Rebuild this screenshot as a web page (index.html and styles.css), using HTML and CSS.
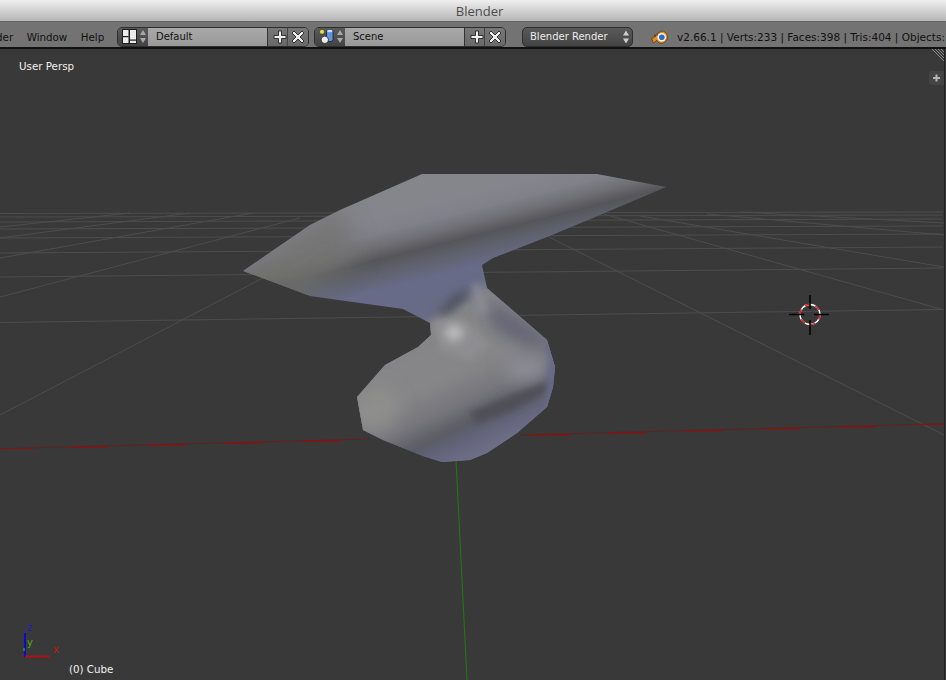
FILE: index.html
```html
<!DOCTYPE html>
<html lang="en">
<head>
<meta charset="utf-8">
<title>Blender</title>
<link rel="stylesheet" href="styles.css">
</head>
<body>
<div class="app">
  <div class="titlebar">Blender</div>
  <div class="header">
    <nav class="menus">
      <span class="menu">Render</span>
      <span class="menu">Window</span>
      <span class="menu">Help</span>
    </nav>
    <div class="selector">
      <div class="sel-icon">
        <svg class="ico" width="15" height="15" viewBox="0 0 15 15">
          <rect x="0.500" y="0.500" width="6.500" height="14" fill="#ececec" stroke="#1c1c1c" stroke-width="1"/>
          <rect x="7.500" y="0.500" width="7" height="14" fill="#ececec" stroke="#1c1c1c" stroke-width="1"/>
          <rect x="1" y="7" width="5.500" height="1.200" fill="#1c1c1c"/>
          <rect x="8" y="10.500" width="6" height="1.200" fill="#1c1c1c"/>
        </svg>
        <svg class="arrows" width="8" height="15" viewBox="0 0 8 15"><path d="M4 1 7 6H1Z M4 14 1 9H7Z" fill="#a8a8a8"/></svg>
      </div>
      <div class="sel-name">Default</div>
      <div class="sel-btn sel-btn-add">
        <svg width="14" height="14" viewBox="0 0 14 14"><path d="M5.500 1h3v4.500h4.500v3H8.500V13h-3V8.500H1v-3h4.500Z" fill="#eee" stroke="#222" stroke-width="0.9"/></svg>
      </div>
      <div class="sel-btn">
        <svg width="14" height="14" viewBox="0 0 14 14"><path d="M3 1 7 5 11 1 13 3 9 7 13 11 11 13 7 9 3 13 1 11 5 7 1 3Z" fill="#eee" stroke="#222" stroke-width="0.9"/></svg>
      </div>
    </div>
    <div class="selector selector-scene">
      <div class="sel-icon">
        <svg class="ico" width="15" height="15" viewBox="0 0 15 15">
          <circle cx="3" cy="2.800" r="2.500" fill="#e6e04a" stroke="#333" stroke-width="0.700"/>
          <rect x="7.500" y="1" width="6.500" height="11.500" rx="2" fill="#5f93dc" stroke="#14203c" stroke-width="0.800"/>
          <ellipse cx="10.800" cy="2" rx="2.800" ry="1.200" fill="#c6dcf8"/>
          <circle cx="5.800" cy="10.800" r="3.700" fill="#ececec" stroke="#1c1c1c" stroke-width="0.800"/>
        </svg>
        <svg class="arrows" width="8" height="15" viewBox="0 0 8 15"><path d="M4 1 7 6H1Z M4 14 1 9H7Z" fill="#a8a8a8"/></svg>
      </div>
      <div class="sel-name">Scene</div>
      <div class="sel-btn sel-btn-add">
        <svg width="14" height="14" viewBox="0 0 14 14"><path d="M5.500 1h3v4.500h4.500v3H8.500V13h-3V8.500H1v-3h4.500Z" fill="#eee" stroke="#222" stroke-width="0.9"/></svg>
      </div>
      <div class="sel-btn">
        <svg width="14" height="14" viewBox="0 0 14 14"><path d="M3 1 7 5 11 1 13 3 9 7 13 11 11 13 7 9 3 13 1 11 5 7 1 3Z" fill="#eee" stroke="#222" stroke-width="0.9"/></svg>
      </div>
    </div>
    <div class="engine">
      <span>Blender Render</span>
      <svg width="8" height="14" viewBox="0 0 8 14"><path d="M4 0.500 7 5.500H1Z M4 13.500 1 8.500H7Z" fill="#cfcfcf"/></svg>
    </div>
    <svg class="logo" width="17" height="14" viewBox="0 0 17 14">
      <path d="M0.500 9 5 6 3 5.200 7 5 6 3.500 11 1C14.500 1.500 16.800 4.200 16.500 7.500 16 11 13 13.500 10 13.300 7.800 13.200 6.400 12 5.800 10.300L3 12.700C1.800 13.200 0.800 12.200 2 11Z" fill="#ea8c1e" stroke="#3a2a10" stroke-width="0.600"/>
      <circle cx="10.700" cy="7.300" r="4.300" fill="#f4f4f4"/>
      <circle cx="10.800" cy="7.300" r="2.800" fill="#2f6cc0"/>
    </svg>
    <div class="stats">v2.66.1 | Verts:233 | Faces:398 | Tris:404 | Objects:1/1 | Lamps:0/0 | Mem:7.52M</div>
  </div>
  <div class="viewport">
    <svg class="scene" width="946" height="631" viewBox="0 49 946 631">
      <defs>
        <clipPath id="mesh-clip">
          <path d="M243 271 310 225 340 210 422 174H597L666 187 600 215 547 237 493 258 482 265 487 288 547 340 555 367 553 387 547 407 517 433 487 453 470 460 442 462 423 456 383 440 363 430 357 397 385 365 418 347 431 335 430 323 403 309 310 296Z"/>
        </clipPath>
        <linearGradient id="wing-shade" gradientUnits="userSpaceOnUse" x1="65.600" y1="261.900" x2="97.200" y2="388">
          <stop offset="0" stop-color="#85858c"/>
          <stop offset="0.250" stop-color="#85858c"/>
          <stop offset="0.370" stop-color="#80808a"/>
          <stop offset="0.470" stop-color="#6f6f74"/>
          <stop offset="0.570" stop-color="#56565a"/>
          <stop offset="0.680" stop-color="#60626f"/>
          <stop offset="0.800" stop-color="#686b88"/>
          <stop offset="1" stop-color="#686b86"/>
        </linearGradient>
        <linearGradient id="body-shade" gradientUnits="userSpaceOnUse" x1="206.400" y1="432" x2="266.600" y2="558">
          <stop offset="0" stop-color="#858588"/>
          <stop offset="0.400" stop-color="#868688"/>
          <stop offset="0.600" stop-color="#76767c"/>
          <stop offset="0.750" stop-color="#5a5a62"/>
          <stop offset="0.850" stop-color="#62647a"/>
          <stop offset="1" stop-color="#6e7088"/>
        </linearGradient>
        <filter id="blur-huge" x="-50%" y="-50%" width="200%" height="200%"><feGaussianBlur stdDeviation="12"/></filter>
        <filter id="blur-big" x="-40%" y="-40%" width="180%" height="180%"><feGaussianBlur stdDeviation="9"/></filter>
        <filter id="blur-mid" x="-40%" y="-40%" width="180%" height="180%"><feGaussianBlur stdDeviation="5"/></filter>
        <filter id="blur-small" x="-60%" y="-60%" width="220%" height="220%"><feGaussianBlur stdDeviation="3"/></filter>
      </defs>

      <g class="grid">
        <path d="M0 213.500 943 212M0 217 943 215M0 222 943 219M0 229 943 226M0 238 943 234M0 253 943 247M0 277 943 268M0 322.500 943 309.500"/>
        <path d="M0 227 130 213M0 238 190 213M0 258 253 213M0 297 300 218M0 415 330 243"/>
        <path d="M547 236 944 435M600 213 944 310M640 216 944 267M707 214 944 235M740 212 944 223"/>
      </g>

      <path class="axis-red" d="M0 448.700 370 439M520 435 944 423.700"/>
      <path class="axis-red-dash" d="M0 448.500H32M70 446.800H108M148 445.100H186M224 443.500H262M302 441.200H340M530 434.800H570M608 432.800H646M684 430.700H722M762 428.600H800M838 426.600H876M914 424.500H944"/>
      <path class="axis-green" d="M456 460 467 680"/>

      <g clip-path="url(#mesh-clip)">
        <rect x="230" y="165" width="450" height="310" fill="url(#wing-shade)"/>
        <path d="M225 275 340 205 360 258 300 298 235 292Z" fill="#727270" opacity="0.800" filter="url(#blur-huge)"/>
        <path d="M320 385 395 345 430 322 485 285 610 330V500H320Z" fill="url(#body-shade)" filter="url(#blur-mid)"/>
        <g filter="url(#blur-big)">
          <path d="M490 300 545 335 555 350 525 345 490 325Z" fill="#5f5f72"/>
          <path d="M505 362 545 358 548 376 512 382Z" fill="#90909c"/>
          <path d="M355 400 385 385 400 410 385 430 358 425Z" fill="#8f8f8d"/>
        </g>
        <g filter="url(#blur-small)">
          <path d="M552 340 560 370 556 395 545 410 546 385 549 362 545 345Z" fill="#686a88"/>
          <path d="M472 284 478 284 487 312 480 314Z" fill="#8a8b98"/>
          <path d="M432 322 440 315 468 322 490 345 470 360 440 350Z" fill="#8e8e92"/>
          <path d="M470 412 510 396 548 382 546 392 510 412 476 424Z" fill="#505058"/>
        </g>
        <g filter="url(#blur-mid)">
          <path d="M434 318 450 298 466 288 468 298 448 314Z" fill="#505260"/>
          <ellipse cx="454" cy="333" rx="9" ry="8" fill="#bcbcbc"/>
        </g>
      </g>

      <g class="cursor">
        <circle cx="810" cy="314.500" r="10" class="cursor-white"/>
        <circle cx="810" cy="314.500" r="10" class="cursor-red"/>
        <path d="M810 295V309M810 320V335M789 314.500H804M814 314.500H829"/>
      </g>

      <path class="hatch" d="M932 49 944 61M935 49 944 58M938 49 944 55M941 49 944 52"/>
      <rect x="929" y="71" width="16" height="14" rx="3" fill="#444"/>
      <path d="M936.500 74.500V81.500M933 78H940" stroke="#b4b4b4" stroke-width="2"/>

      <path d="M25 633V657" stroke="#0a0ac8" stroke-width="2"/>
      <path d="M25 656.500H50" stroke="#b01010" stroke-width="2"/>
      <path d="M24 648V651" stroke="#3a9a10" stroke-width="1.500"/>
      <text class="axis-label" x="27" y="631" fill="#1a1ad0">z</text>
      <text class="axis-label" x="27" y="646" fill="#50b010">y</text>
      <text class="axis-label" x="53" y="653" fill="#c01818">x</text>
      <text class="vp-text" x="19" y="70">User Persp</text>
      <text class="vp-text" x="69" y="673">(0) Cube</text>
    </svg>
    <div class="edge"></div>
  </div>
</div>
</body>
</html>
```

FILE: styles.css
```css
html, body {
  margin: 0;
  padding: 0;
  background: #393939;
}

.app {
  width: 946px;
  height: 680px;
  overflow: hidden;
  display: flex;
  flex-direction: column;
  font-family: "DejaVu Sans", sans-serif;
}

.titlebar {
  height: 21px;
  flex: none;
  box-sizing: content-box;
  padding-left: 13px;
  text-align: center;
  line-height: 22px;
  font-family: "Open Sans", sans-serif;
  font-size: 13px;
  color: #4c4c4c;
  background: linear-gradient(#efefef, #b6b6b6);
  border-bottom: 1px solid #666;
}

.header {
  height: 21px;
  padding-top: 4px;
  flex: none;
  display: flex;
  align-items: center;
  background: #737373;
  border-bottom: 2px solid #111;
  font-size: 10px;
  white-space: nowrap;
  overflow: hidden;
}

.menus {
  display: flex;
  align-items: center;
  gap: 13.500px;
  margin-left: -23.500px;
  width: 140.500px;
  flex: none;
  font-size: 10.300px;
  color: #111;
}

.menu {
  flex: none;
}

.selector {
  flex: none;
  width: 192px;
  height: 20px;
  box-sizing: border-box;
  display: flex;
  border: 1px solid #2e2e2e;
  border-radius: 5px;
  overflow: hidden;
  color: #111;
}

.selector-scene {
  margin-left: 5px;
}

.sel-icon {
  width: 30px;
  flex: none;
  display: flex;
  align-items: center;
  gap: 2px;
  padding-left: 4px;
  box-sizing: border-box;
  background: linear-gradient(#5a5a5a, #434343);
}

.ico,
.arrows {
  flex: none;
}

.sel-name {
  flex: 1;
  padding-left: 8px;
  line-height: 18px;
  background: linear-gradient(#a9a9a9, #999);
  border-right: 1px solid #333;
}

.sel-btn {
  width: 20px;
  flex: none;
  display: flex;
  align-items: center;
  justify-content: center;
  box-sizing: border-box;
  background: linear-gradient(#777, #696969);
}

.sel-btn-add {
  padding-left: 4px;
  border-right: 1px solid #444;
}

.engine {
  flex: none;
  width: 111px;
  height: 20px;
  box-sizing: border-box;
  margin-left: 16px;
  padding: 0 2px 0 7px;
  display: flex;
  align-items: center;
  justify-content: space-between;
  color: #ececec;
  border: 1px solid #2e2e2e;
  border-radius: 5px;
  background: linear-gradient(#5a5a5a, #434343);
}

.logo {
  flex: none;
  margin-left: 18px;
}

.stats {
  flex: none;
  margin-left: 9px;
  font-size: 10.500px;
  color: #111;
}

.viewport {
  flex: 1;
  position: relative;
  overflow: hidden;
}

.scene {
  display: block;
}

.edge {
  position: absolute;
  top: 0;
  bottom: 0;
  right: 1px;
  width: 1px;
  background: #222;
}

.grid path {
  fill: none;
  stroke: #4d4d4d;
  stroke-width: 1;
}

.axis-red {
  fill: none;
  stroke: #642020;
  stroke-width: 1;
}

.axis-red-dash {
  fill: none;
  stroke: #8f0f0f;
  stroke-width: 1.200;
}

.axis-green {
  fill: none;
  stroke: #1f7d10;
  stroke-width: 1;
}

.cursor path {
  fill: none;
  stroke: #000;
  stroke-width: 1.500;
}

.cursor-white {
  fill: none;
  stroke: #fff;
  stroke-width: 1.300;
}

.cursor-red {
  fill: none;
  stroke: #e01010;
  stroke-width: 1.300;
  stroke-dasharray: 5.200 5.270;
}

.hatch {
  fill: none;
  stroke: #8a8a8a;
  stroke-width: 1;
}

.axis-label {
  font-family: "DejaVu Sans", sans-serif;
  font-size: 10px;
}

.vp-text {
  font-family: "DejaVu Sans", sans-serif;
  font-size: 10.300px;
  fill: #f0f0f0;
}
```
